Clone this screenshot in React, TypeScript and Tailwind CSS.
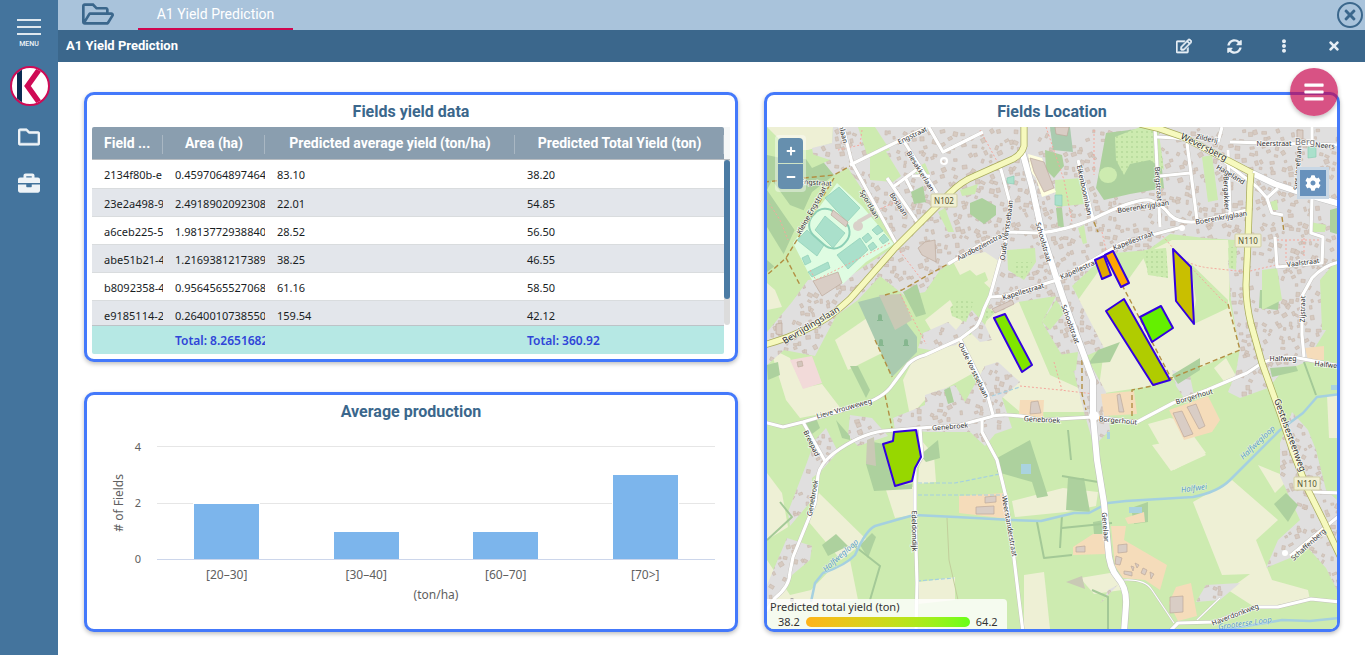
import React from "react";
import {
  FaBars,
  FaBriefcase,
  FaCog,
  FaEllipsisV,
  FaMinus,
  FaPlus,
  FaRegEdit,
  FaRegFolder,
  FaRegFolderOpen,
  FaSyncAlt,
  FaTimes,
} from "react-icons/fa";

const COLUMNS = ["Field ...", "Area (ha)", "Predicted average yield (ton/ha)", "Predicted Total Yield (ton)"];

const ROWS = [
  ["2134f80b-e", "0.4597064897464", "83.10", "38.20"],
  ["23e2a498-9", "2.4918902092308", "22.01", "54.85"],
  ["a6ceb225-5", "1.9813772938840", "28.52", "56.50"],
  ["abe51b21-4", "1.2169381217389", "38.25", "46.55"],
  ["b8092358-4", "0.9564565527068", "61.16", "58.50"],
  ["e9185114-2", "0.2640010738550", "159.54", "42.12"],
];

const BARS = [
  { label: "[20–30]", value: 2 },
  { label: "[30–40]", value: 1 },
  { label: "[60–70]", value: 1 },
  { label: "[70>]", value: 3 },
];

/* ---------- Map data ---------- */

const RESIDENTIAL = [
  "812,148 832,143 833,127 1337,127 1337,258 1322,290 1326,330 1306,362 1282,372 1268,388 1240,398 1228,392 1236,372 1240,348 1236,330 1231,300 1228,262 1236,240 1205,238 1170,234 1148,250 1104,254 1096,264 1072,286 1104,348 1086,356 1106,392 1110,430 1094,446 1084,412 1074,372 1060,352 1042,322 1056,296 1018,302 1000,312 988,308 1000,262 985,252 958,258 940,270 925,292 905,296 880,276 858,300 836,316 815,356 784,350 767,365 767,332 792,302 808,280 850,276 898,244 848,168 828,178 815,165",
  "923,333 948,322 956,330 972,310 985,325 992,340 980,342 968,330 956,345 930,350 918,348",
  "893,418 925,405 925,395 955,385 965,402 985,366 998,362 1020,382 1002,398 1012,428 995,434 985,446 970,432 930,432 895,430",
  "850,415 872,418 888,436 858,446 848,436",
  "806,465 815,440 826,428 838,452 822,470 812,478 812,500 790,526 788,512",
  "767,585 787,538 812,546 810,560 792,575 775,600 767,605",
  "1280,443 1292,412 1308,430 1316,450 1326,490 1337,500 1337,590 1326,568 1308,548 1290,558 1266,568 1278,540 1300,520 1280,476",
  "1196,602 1206,585 1240,583 1220,600",
  "1172,370 1190,376 1194,395 1184,398 1176,386",
  "1108,590 1118,585 1100,603 1104,600",
];

const CREAM = [
  "767,127 833,127 832,143 808,150 790,150 778,138",
  "1078,300 1105,262 1128,280 1148,252 1172,240 1228,240 1230,262 1229,300 1240,350 1172,380 1152,386 1098,394 1104,350 1094,348",
  "903,380 913,360 960,342 985,325 992,305 1018,300 1050,375 1092,394 1090,412 1020,412 1000,395 975,372 925,400 910,416",
  "835,340 867,318 882,353 848,370",
  "770,348 790,358 803,388 822,384 842,410 800,418 786,400",
  "925,320 950,300 975,345 940,345",
  "970,252 990,243 1000,255 992,290 970,270 960,275 950,256",
  "767,473 782,493 788,527 767,540",
  "819,493 867,540 841,560 808,521",
  "886,490 913,487 913,515 895,518",
  "921,440 934,455 936,482 918,484",
  "919,582 955,577 955,600 918,604",
  "1012,501 1063,488 1098,492 1096,506 1066,512 1015,517",
  "1152,445 1178,440 1192,440 1206,455 1171,471",
  "1148,424 1170,418 1182,420 1206,453 1174,470",
  "1193,502 1232,480 1278,520 1256,540 1272,580 1308,590 1310,600 1256,608 1228,590 1250,574 1222,575",
  "1258,465 1290,478 1275,493",
  "1080,578 1116,572 1122,590 1094,594",
  "1024,575 1044,572 1050,629 1024,629",
  "767,560 790,595 811,590 830,570 850,560 858,600 767,610",
  "1214,368 1226,358 1236,376 1226,384",
  "1327,395 1337,395 1337,438 1329,438",
  "767,283 775,290 782,307 767,310",
];

const GRASS = [
  "1190,263 1228,300 1228,308 1192,325 1196,300",
  "870,154 885,150 901,176 893,182 870,180",
  "858,127 875,127 890,150 868,158",
  "912,170 925,163 930,175 920,178",
  "945,208 954,232 948,232 938,212",
  "1055,180 1082,178 1084,204 1056,207",
  "1202,157 1212,155 1218,200 1208,202",
  "1262,270 1277,268 1282,300 1262,310",
  "1084,225 1087,243 1083,244 1078,228",
  "1007,250 1035,248 1036,262 1024,280 1008,270",
  "955,285 985,272 988,280 960,300",
  "1042,322 1056,300 1065,312 1050,330",
  "1058,355 1078,352 1076,370 1062,376",
  "1320,280 1337,260 1337,330 1322,330",
  "1270,202 1277,200 1278,210 1272,210",
  "1142,255 1166,248 1168,275 1148,270",
  "1310,222 1326,225 1325,232 1310,232",
  "960,190 978,184 975,194 962,196",
];

const FOREST = [
  "767,155 790,160 820,158 834,175 812,192 780,262 767,272",
  "970,203 982,198 996,206 996,215 984,224 970,214",
  "911,192 923,186 926,202 914,204",
  "1106,133 1130,130 1152,127 1160,150 1164,188 1130,194 1104,200 1096,188",
  "1045,150 1062,155 1064,166 1054,178 1046,170",
  "1056,208 1062,208 1064,228 1058,226",
  "1260,290 1280,290 1278,310 1259,308",
  "1330,210 1337,208 1337,234 1330,232",
  "903,292 917,284 926,314 916,317",
  "873,442 884,444 895,486 912,484 912,489 874,491 866,464",
  "997,458 1030,440 1048,496 1037,498 1032,482 997,472",
  "1088,364 1098,350 1120,342 1110,362",
  "1172,375 1200,358 1200,370 1178,384",
  "850,366 858,366 870,390 866,398",
  "836,420 850,436 850,440 842,438",
  "944,390 950,387 954,402 948,404",
  "1274,504 1286,493 1298,505 1288,522",
  "860,545 872,533 876,537 868,558",
  "1131,508 1148,502 1148,522 1134,524",
  "1270,368 1296,366 1298,371 1272,377",
  "822,545 836,534 848,546 828,556",
  "1068,478 1084,478 1090,512 1066,510",
  "1093,522 1104,520 1102,534 1094,534",
  "767,365 778,362 780,375 768,380",
  "804,420 816,418 820,428 812,434",
  "920,455 938,440 940,458 926,462",
];

const YARD = [
  "959,496 1004,493 1009,519 959,513",
  "1111,526 1126,526 1124,540 1167,565 1160,590 1145,580 1123,578 1115,566",
  "1176,587 1191,583 1197,616 1178,621 1169,603",
  "1073,547 1093,534 1104,534 1106,554 1073,555",
  "1101,394 1134,391 1137,414 1104,416",
  "1169,410 1208,396 1220,420 1212,432 1184,440",
  "1020,400 1044,400 1043,418 1019,414",
  "1305,348 1324,346 1324,360 1308,360",
  "1125,518 1144,512 1145,522 1128,524",
];

const LARGE_BUILDINGS = [
  "813,281 838,272 842,283 822,296",
  "1030,158 1044,162 1054,188 1044,192 1034,172",
  "1173,413 1182,411 1193,434 1184,437",
  "1187,407 1196,404 1205,426 1199,429",
  "976,507 994,506 994,514 976,514",
  "985,497 996,496 996,502 985,503",
  "1170,597 1183,596 1183,612 1170,613",
  "1118,545 1127,544 1127,552 1118,553",
  "1076,547 1085,546 1085,552 1076,552",
  "1117,395 1120,394 1124,412 1119,412",
  "1031,402 1038,401 1041,413 1030,414",
  "992,309 1012,300 1014,304 995,313",
  "1297,130 1303,130 1303,139 1297,139",
  "833,210 848,222 846,227 831,215",
  "925,242 935,240 936,262 922,255 918,248",
  "1055,127 1069,127 1067,136 1056,134",
  "776,324 782,323 782,335 776,334",
];

const MAIN_YELLOW = [
  "M1024 124V146Q1022 154 1013 159L975 176Q962 181 950 193L895 248L850 299Q828 320 805 330Q786 339 764 345",
  "M1140 124L1157 128L1183 137L1252 173",
  "M1251 173L1250 185L1248 240L1246 285Q1246 304 1251 324L1262 363L1280 413L1293 452L1307 488L1324 522L1340 556",
];

const MAIN_WHITE = [
  "M1022 151L1032 187L1042 233L1057 280L1068 312L1082 350L1093 380V416L1097 460L1104 503L1108 547Q1109 568 1118 578Q1127 588 1126 605L1124 632",
  "M1252 173L1275 184L1302 193L1340 204",
];

const ROADS = [
  "M764 422L783 427L803 422L860 405Q884 398 893 384L908 364Q914 358 925 355L960 339L976 327Q980 322 984 309L990 296L1000 260Q1010 234 1010 203L1000 166",
  "M960 339L987 393L993 415",
  "M803 422L825 461",
  "M764 614L775 598Q790 586 790 572L793 557L815 503L818 475Q820 464 834 453Q860 434 883 431L920 428L960 425L990 417Q1000 413 1027 417L1040 420L1093 417L1137 422L1173 403L1207 390L1247 373L1262 363Q1280 355 1298 358L1340 366",
  "M920 428L922 457L915 468V513L917 583L916 632",
  "M982 420V432L997 460L1006 497L1013 550L1019 600L1023 632",
  "M990 297L1005 296L1057 280L1093 260L1122 243L1182 227",
  "M948 264L980 245L1008 232L1040 233Q1067 230 1093 219Q1135 198 1150 200Q1162 204 1170 215Q1178 223 1195 222L1247 210",
  "M1155 127L1160 227",
  "M1078 160L1093 219",
  "M842 124L852 163L897 245",
  "M850 165L927 127",
  "M903 140L937 193",
  "M927 124L943 152L983 132",
  "M887 178L918 223",
  "M893 187L920 167M905 177L912 191M912 176L930 176",
  "M1157 137Q1195 138 1207 148L1257 187L1267 198Q1270 208 1272 213L1283 215M1267 198L1278 188",
  "M1187 143L1197 220M1228 150L1230 214M1160 176L1190 173",
  "M1230 142L1340 145M1222 127L1218 142M1312 127V145",
  "M1312 197L1311 233L1323 237L1322 263L1277 267L1275 237",
  "M1340 262Q1325 264 1312 278L1302 296V335L1304 357",
  "M1169 632L1178 623L1215 622L1256 607L1278 607L1311 599L1340 602",
  "M1340 515L1290 556M1312 492L1340 493",
];

const LANES = ["M1124 580Q1145 579 1152 590L1174 623", "M1197 620L1220 598"];

const RIVERS = [
  "M811 602L815 583L823 573Q846 565 855 555Q866 530 875 526L889 522L914 515L956 517L1012 520L1041 521L1074 513H1089L1108 503L1126 501L1193 497Q1218 492 1230 480L1252 458L1280 430L1303 413L1317 397L1340 394",
  "M1205 632L1240 627L1271 622L1282 620L1310 621L1340 618",
];

const TRACKS = [
  "M764 182L834 175L850 166M834 178L786 258L767 275M786 258L800 285",
  "M875 340L892 377M885 395L892 428",
  "M885 295L902 290L930 274L948 264",
  "M1094 222L1098 232M1122 285L1130 300L1172 380M1228 304L1240 350L1152 386L1132 390V422M1082 360V394L1086 410",
  "M1282 217L1284 232",
];

const PATHS = [
  "M980 130L998 163M1046 127L1064 180L1072 222M1094 130V175M1102 232L1106 250",
  "M1160 233L1180 256Q1190 266 1210 268L1246 272L1280 264M1180 256L1222 300L1228 304",
  "M900 294L926 344M767 200L780 220L788 240M1020 386L1060 390L1094 394M1054 362L1062 390",
  "M873 212L900 200M895 245L922 280M1277 240H1322M1286 240V262M1304 238V258",
  "M810 270L816 280L890 243M862 130L860 145L838 150",
];

const STREET_LABELS: [number, number, number, string, number?][] = [
  [912, 135, -26, "Engstraat"],
  [816, 182, 3, "Engstraat"],
  [811, 210, -61, "Kleine Engstraat"],
  [870, 204, 60, "Sportlaan"],
  [899, 204, 56, "Boslaan"],
  [921, 171, 58, "Biesakkerlaan"],
  [844, 134, 76, "nlaan"],
  [811, 325, -31, "Bevrijdingslaan", 9],
  [982, 245, -28, "Aardbezienstraat"],
  [1006, 230, -82, "Oude Vorstsebaan"],
  [1044, 242, 74, "Schoolstraat"],
  [1071, 324, 70, "Schoolstraat"],
  [1023, 291, -17, "Kapellestraat"],
  [1080, 268, -24, "Kapellestraat"],
  [1133, 240, -21, "Kapellestraat"],
  [1085, 190, 78, "Eikenboomlaan"],
  [1143, 206, -9, "Boerenkrijglaan"],
  [1221, 217, -10, "Boerenkrijglaan"],
  [1204, 147, 27, "Weversberg", 9],
  [1207, 138, 13, "Zilderij"],
  [1231, 174, 31, "Hageland"],
  [1159, 184, 86, "Bergstraat"],
  [1227, 193, 88, "Bergakker"],
  [1274, 143, 0, "Neerstraat"],
  [1325, 145, 4, "Neers"],
  [1297, 168, -86, "Sint Jozeflaan"],
  [1303, 262, -7, "Vaalstraat"],
  [1302, 309, -89, "Zijstraat"],
  [1283, 358, 0, "Halfweg"],
  [1326, 364, 6, "Halfwe"],
  [844, 408, -16, "Lieve Vrouweweg"],
  [974, 370, 64, "Oude Vorstsebaan"],
  [812, 443, 64, "Breepad"],
  [950, 426, -5, "Genebroek"],
  [1042, 419, 3, "Genebroek"],
  [1118, 420, 5, "Borgerhout"],
  [1194, 396, -17, "Borgerhout"],
  [812, 498, -80, "Genebroek"],
  [915, 531, 89, "Edeldomdijk"],
  [1010, 526, 80, "Weerstanderstraat"],
  [1106, 527, 85, "Genelaar"],
  [1290, 435, 70, "Gestelsesteenweg", 9],
  [1308, 544, -42, "Schaffenberg"],
  [1235, 614, -21, "Haverdonkweg"],
];

const WATER_LABELS: [number, number, number, string][] = [
  [841, 556, -42, "Halfwegloop"],
  [1258, 443, -44, "Halfwegloop"],
  [1194, 489, -8, "Halfwei"],
  [1245, 624, -8, "Grooterse Loop"],
];

const FIELDS = [
  { points: "1095,260 1104,256 1111,275 1102,279", fill: "#e2a800" },
  { points: "1105,255 1113,251 1129,283 1121,287", fill: "#ffa500" },
  { points: "1173,249 1191,267 1194,324 1176,301", fill: "#c9bf00" },
  { points: "1106,311 1124,299 1170,380 1153,385", fill: "#b0cc00" },
  { points: "1140,317 1161,306 1173,328 1152,342", fill: "#64f000" },
  { points: "994,318 1005,314 1032,365 1022,372", fill: "#80e600" },
  { points: "883,444 893,441 894,432 916,430 921,457 915,468 912,481 895,486", fill: "#97d700" },
];

/* Small deterministic noise source for the scatter of houses. */
const noise = (n: number) => {
  const v = Math.sin(n * 127.1 + 11.7) * 43758.5453;
  return v - Math.floor(v);
};

const HOUSES = (() => {
  const list: { x: number; y: number; w: number; h: number; a: number }[] = [];
  let seed = 1;
  for (let y = 129; y < 629; y += 7) {
    for (let x = 769; x < 1337; x += 7) {
      seed += 1;
      if (noise(seed) < 0.42) continue;
      list.push({
        x: x + noise(seed + 0.31) * 5,
        y: y + noise(seed + 0.57) * 5,
        w: 2 + noise(seed + 0.73) * 3,
        h: 2 + noise(seed + 0.91) * 2.5,
        a: noise(seed + 0.13) * 60 - 30,
      });
    }
  }
  return list;
})();

function Polygons({ items, fill }: { items: string[]; fill: string }) {
  return (
    <g fill={fill}>
      {items.map((p) => (
        <polygon key={p} points={p} />
      ))}
    </g>
  );
}

function Strokes({ items, color, width, dash }: { items: string[]; color: string; width: number; dash?: string }) {
  return (
    <g fill="none" stroke={color} strokeWidth={width} strokeDasharray={dash} strokeLinejoin="round">
      {items.map((d) => (
        <path key={d} d={d} />
      ))}
    </g>
  );
}

function RoadShield({ x, y, text }: { x: number; y: number; text: string }) {
  return (
    <g>
      <rect x={x - 13} y={y - 6} width="26" height="13" rx="1" fill="#f0efd2" stroke="#d2d0a4" />
      <text x={x} y={y + 4} textAnchor="middle" fontSize="8" fill="#55552e">
        {text}
      </text>
    </g>
  );
}

function FieldMap() {
  return (
    <svg
      viewBox="767 127 570 502"
      preserveAspectRatio="xMidYMid slice"
      className="absolute inset-0 h-full w-full font-['Noto_Sans','Open_Sans',sans-serif]"
      role="img"
      aria-label="Fields Location"
    >
      <defs>
        <clipPath id="residential">
          {RESIDENTIAL.map((p) => (
            <polygon key={p} points={p} />
          ))}
        </clipPath>
        <pattern id="scrub" width="5" height="5" patternUnits="userSpaceOnUse">
          <rect width="5" height="5" fill="#cdebb0" />
          <circle cx="2" cy="2" r="0.7" fill="#9cc983" />
        </pattern>
      </defs>
      <rect x="767" y="127" width="570" height="502" fill="#cdebb0" />
      <Polygons items={CREAM} fill="#eef0d5" />
      <Polygons items={RESIDENTIAL} fill="#e0dfdf" />
      <g clipPath="url(#residential)" fill="#d6cac1" stroke="#c6b5a9" strokeWidth="0.5">
        {HOUSES.map((h, i) => (
          <rect key={i} x={h.x} y={h.y} width={h.w} height={h.h} transform={`rotate(${h.a} ${h.x} ${h.y})`} />
        ))}
      </g>
      <Polygons items={FOREST} fill="#add19e" />
      <Polygons items={GRASS} fill="#cdebb0" />
      <Polygons
        items={["772,180 790,205 808,212 796,232 782,212 767,190", "767,227 786,258 776,268 767,260", "800,150 830,160 812,168"]}
        fill="#cdebb0"
      />
      <g fill="url(#scrub)">
        <polygon points="1115,137 1140,127 1158,127 1164,170 1150,160 1130,164 1124,175 1116,160" />
        <polygon points="950,308 958,300 974,302 966,322 952,316" />
        <polygon points="1144,250 1166,248 1168,278 1148,275" />
        <polygon points="1228,248 1237,246 1236,270 1229,268" />
        <polygon points="985,308 996,312 985,322" />
        <polygon points="1016,262 1032,262 1024,278 1016,276" />
      </g>
      <ellipse cx="1108" cy="175" rx="9" ry="8" fill="#cdebb0" />
      <polygon points="858,302 885,295 917,337 917,352 892,377" fill="#aacbaf" />
      <polygon points="879,295 901,294 912,320 895,330" fill="#c9c9b5" />
      <polygon points="867,440 874,437 876,466 866,464" fill="#c9c9b5" />
      <polygon points="1066,582 1082,576 1085,589" fill="#c9c9b5" />
      <polygon points="1050,127 1070,127 1073,152 1053,150" fill="#aacbaf" />
      <polygon points="790,360 812,356 822,383 803,389" fill="#f2dad9" />
      <polygon points="797,362 802,361 803,366 798,367" fill="#d3c5bb" stroke="#bda99b" strokeWidth="0.6" />
      <g fill="#86b78f">
        <path d="M878 320v-4a2 2 0 0 1 4 0v4h1v1h-6v-1zM879 345v-4a2 2 0 0 1 4 0v4h1v1h-6v-1zM904 345v-4a2 2 0 0 1 4 0v4h1v1h-6v-1z" />
      </g>
      <path d="M1028 154L1042 158L1048 176L1056 192L1042 197L1036 178L1031 172Z" fill="#ffffe0" />
      <Polygons items={YARD} fill="#f5dcba" />
      {/* Sports centre */}
      <polygon points="837,183 862,206 894,244 866,262 843,284 812,280 793,243" fill="#dffce2" />
      <g fill="#aae0cb" stroke="#8ccfb6" strokeWidth="0.7">
        <polygon points="839,187 860,208 847,222 825,198" />
        <polygon points="825,216 845,233 833,248 815,230" />
        <polygon points="807,230 824,245 817,256 797,240" />
        <polygon points="860,238 868,250 848,269 837,255" />
        <polygon points="862,238 868,233 872,238 866,243" />
        <polygon points="872,230 878,225 883,231 877,235" />
        <polygon points="868,246 873,242 877,247 871,251" />
        <polygon points="879,239 884,234 889,240 883,244" />
        <polygon points="802,258 808,255 811,262 805,265" />
        <polygon points="808,272 828,262 830,268 812,277" />
        <polygon points="1055,195 1062,195 1062,206 1055,205" />
        <polygon points="1308,147 1316,147 1316,157 1308,158" />
        <polygon points="1007,178 1014,176 1014,184 1007,183" />
      </g>
      <rect x="808" y="213" width="42" height="31" rx="14" fill="none" stroke="#8ccfb6" strokeWidth="2" transform="rotate(42 829 229)" />
      <circle cx="858" cy="226" r="5" fill="#d9d0c9" />
      <path d="M858 222L872 214" stroke="#d9d0c9" strokeWidth="4" />
      <g fill="#d9cdc5" stroke="#bda99b" strokeWidth="0.7">
        {LARGE_BUILDINGS.map((p) => (
          <polygon key={p} points={p} />
        ))}
        <path d="M1116 556l6 2-2 7-5-1zM1124 571l8 1v4l-8-2zM1135 563l4 2-2 3zM1143 568l4 2-2 5-4-2zM1150 572l4 2-3 5zM1131 566l3 1-1 4z" />
      </g>
      <g fill="#aad3df">
        <rect x="1021" y="464" width="10" height="10" />
        <rect x="1129" y="507" width="13" height="6" />
        <rect x="1107" y="432" width="3" height="7" />
        <rect x="1331" y="385" width="6" height="5" />
      </g>
      <Strokes items={["M767 540L792 517L780 502M1037 522L1044 558L1072 555M1062 515L1060 548M1062 528L1112 523M1068 430L1071 460M1062 476L1098 482M1304 362L1316 395M1092 590L1108 597V629M852 544L880 566L870 600"]} color="#a4c997" width={2} />
      <Strokes items={["M947 518L949 560L958 600"]} color="#c2cf9c" width={1} />
      <Strokes items={RIVERS} color="#a5d0e0" width={2.5} />
      <Strokes items={["M918 483H955L1000 474M918 495H1004M917 581L954 578M992 396L1020 387"]} color="#a5d0e0" width={1.2} dash="4 2" />
      <Strokes items={PATHS} color="#f5a79c" width={1} dash="2 2" />
      <Strokes items={TRACKS} color="#b28f43" width={1.4} dash="5 3" />
      <Strokes items={LANES} color="#c4c2bd" width={2} />
      <Strokes items={LANES} color="#ffffff" width={1.2} />
      <Strokes items={ROADS} color="#c4c2bd" width={4} />
      <Strokes items={MAIN_WHITE} color="#bdbdbd" width={7} />
      <Strokes items={ROADS} color="#ffffff" width={3.2} />
      <Strokes items={MAIN_WHITE} color="#ffffff" width={6} />
      <Strokes items={MAIN_YELLOW} color="#a9ab5c" width={7} />
      <Strokes items={MAIN_YELLOW} color="#f6f9be" width={5.5} />
      <circle cx="1094" cy="416" r="5" fill="#ffffff" />
      <circle cx="1182" cy="228" r="3" fill="#ffffff" />
      <circle cx="944" cy="161" r="3" fill="none" stroke="#ffffff" strokeWidth="2" />
      <circle cx="1285" cy="553" r="3" fill="#ffffff" />
      <g fill="#2f2f2f" stroke="#ffffff" strokeOpacity="0.7" strokeWidth="1.6" paintOrder="stroke" textAnchor="middle">
        {STREET_LABELS.map(([x, y, angle, text, size], i) => (
          <text key={i} x={x} y={y + 3} fontSize={size ?? 7} transform={`rotate(${angle} ${x} ${y})`}>
            {text}
          </text>
        ))}
        <text x="1305" y="145" fontSize="9" fill="#777777">
          Berg
        </text>
      </g>
      <g fill="#5a9cc4" fontStyle="italic" textAnchor="middle" stroke="#ffffff" strokeOpacity="0.5" strokeWidth="1" paintOrder="stroke">
        {WATER_LABELS.map(([x, y, angle, text], i) => (
          <text key={i} x={x} y={y + 2} fontSize="8" transform={`rotate(${angle} ${x} ${y})`}>
            {text}
          </text>
        ))}
      </g>
      <RoadShield x={944} y={200} text="N102" />
      <RoadShield x={1248} y={240} text="N110" />
      <RoadShield x={1307} y={483} text="N110" />
      <g stroke="#3300e0" strokeWidth="2" strokeLinejoin="round">
        {FIELDS.map((f) => (
          <polygon key={f.points} points={f.points} fill={f.fill} />
        ))}
      </g>
      <circle cx="792" cy="600" r="2" fill="#999999" />
      <circle cx="792" cy="606" r="2" fill="#999999" />
    </svg>
  );
}

/* ---------- Layout ---------- */

function Panel({ title, children }: { title: string; children: React.ReactNode }) {
  return (
    <section className="flex flex-col rounded-[10px] border-3 border-[#4479fb] bg-white shadow-[0_2px_4px_rgba(0,0,0,0.25)]">
      <h2 className="h-8 shrink-0 text-center text-base leading-[34px] font-bold text-[#3b678c]">{title}</h2>
      {children}
    </section>
  );
}

const ROW_GRID = "grid grid-cols-[71fr_102fr_250fr_209fr]";

function YieldTable() {
  return (
    <div className="flex px-[5px] pb-[5px]">
      <table className="block min-w-0 flex-1 overflow-hidden rounded-[2px] text-[11px]">
        <thead className="block border-b border-[#b9bdc1] bg-[#8a9eaf] text-sm text-white">
          <tr className={ROW_GRID}>
            {COLUMNS.map((c, i) => (
              <th
                key={c}
                scope="col"
                className={`relative flex h-8 items-center overflow-hidden font-bold whitespace-nowrap ${i === 0 ? "pl-3" : "justify-center"}`}
              >
                {c}
                <span className="absolute top-2 right-0 h-[19px] w-px bg-[#a9b7c3]" />
              </th>
            ))}
          </tr>
        </thead>
        <tbody className="block h-[165px] overflow-hidden font-['Noto_Sans','Open_Sans',sans-serif] text-[#181d1f]">
          {ROWS.map((row) => (
            <tr key={row[0]} className={`${ROW_GRID} h-7 border-b border-[#d9dcde] odd:bg-white even:bg-[#e3e6eb] first:h-[29px]`}>
              {row.map((cell, i) => (
                <td key={i} className="overflow-hidden pl-3 leading-[29px] whitespace-nowrap">
                  {cell}
                </td>
              ))}
            </tr>
          ))}
        </tbody>
        <tfoot className="block border-t border-[#bdc3c7] bg-[#b6e8e4] font-['Noto_Sans','Open_Sans',sans-serif] text-xs font-semibold text-[#2f45d8]">
          <tr className={`${ROW_GRID} h-7`}>
            {["", "Total: 8.2651682", "", "Total: 360.92"].map((cell, i) => (
              <td key={i} className="overflow-hidden pl-3 leading-[29px] whitespace-nowrap">
                {cell}
              </td>
            ))}
          </tr>
        </tfoot>
      </table>
      <div className="flex w-1.5 flex-col">
        <div className="h-[33px] border-b border-[#b9bdc1] bg-[#f5f7f7]" />
        <div className="h-[165px] rounded-b bg-[#dcdcdc]">
          <div className="h-[139px] rounded bg-[#4b7ba4]" />
        </div>
      </div>
    </div>
  );
}

function ProductionChart() {
  return (
    <div className="flex flex-1 flex-col pt-3 pr-5 pb-4 pl-6 font-['Noto_Sans','Open_Sans',sans-serif] text-xs text-[#606060]">
      <div className="flex">
        <div className="flex w-4 items-center justify-center">
          <span className="rotate-180 whitespace-nowrap [writing-mode:vertical-rl]">{"# of Fields"}</span>
        </div>
        <div className="flex h-[128px] w-[14px] flex-col justify-between text-right text-[11px] leading-4">
          <span>4</span>
          <span>2</span>
          <span>0</span>
        </div>
        <div className="relative mt-[7px] ml-4 flex h-[114px] flex-1 flex-col justify-between">
          <div className="h-px bg-[#e6e6e6]" />
          <div className="h-px bg-[#e6e6e6]" />
          <div className="h-px bg-[#ccd6eb]" />
          <div className="absolute inset-x-0 top-0 bottom-px grid grid-cols-4 items-end justify-items-center">
            {BARS.map((b) => (
              <div
                key={b.label}
                className="w-[48%] border-x border-t border-white bg-[#7cb5ec]"
                style={{ height: `${b.value * 25}%` }}
              />
            ))}
          </div>
        </div>
      </div>
      <div className="ml-[46px] grid grid-cols-4 text-center leading-4">
        {BARS.map((b) => (
          <span key={b.label}>{b.label}</span>
        ))}
      </div>
      <div className="mt-1 ml-[46px] text-center leading-4">(ton/ha)</div>
    </div>
  );
}

function MapView() {
  return (
    <div className="relative flex flex-1 flex-col overflow-hidden rounded-b-[7px]">
      <FieldMap />
      <div className="absolute top-2 left-2 flex flex-col gap-px rounded bg-white/40 p-[3px]">
        <button type="button" aria-label="Zoom in" className="flex size-[25px] items-center justify-center rounded-t-sm bg-[#668fae] text-white">
          <FaPlus size={10} />
        </button>
        <button type="button" aria-label="Zoom out" className="flex size-[25px] items-center justify-center rounded-b-sm bg-[#668fae] text-white">
          <FaMinus size={10} />
        </button>
      </div>
      <button
        type="button"
        aria-label="Map settings"
        className="absolute top-10 right-2 flex size-8 items-center justify-center border-3 border-[#d3dfe9]/90 bg-[#6791bc] text-white"
      >
        <FaCog size={16} />
      </button>
      <div className="absolute bottom-0 left-0 w-60 rounded-tr bg-white/80 pl-[3px] font-['Noto_Sans','Open_Sans',sans-serif] text-[11px] leading-[15px] text-[#333]">
        <div>Predicted total yield (ton)</div>
        <div className="flex items-center gap-1.5 pl-2">
          <span>38.2</span>
          <span className="h-2.5 w-[164px] rounded-full bg-linear-to-r from-[#ffb31a] to-[#66ff1a]" />
          <span>64.2</span>
        </div>
      </div>
    </div>
  );
}

function Logo() {
  return (
    <svg viewBox="0 0 40 40" className="size-10" role="img" aria-label="Logo">
      <defs>
        <clipPath id="logo-disc">
          <circle cx="20" cy="20" r="18" />
        </clipPath>
      </defs>
      <circle cx="20" cy="20" r="19" fill="#ffffff" stroke="#cf0a55" strokeWidth="2" />
      <g clipPath="url(#logo-disc)">
        <rect x="7" y="2" width="5" height="36" fill="#0b2c52" />
        <path d="M31 1L17.5 20L31 39" fill="none" stroke="#cf0a55" strokeWidth="5.5" />
      </g>
    </svg>
  );
}

function IconButton({ label, children }: { label: string; children: React.ReactNode }) {
  return (
    <button type="button" aria-label={label} className="flex size-5 items-center justify-center text-[#e6eef5]">
      {children}
    </button>
  );
}

export default function App() {
  return (
    <div className="flex min-h-screen bg-white font-[Roboto,sans-serif]">
      <aside className="flex w-[58px] shrink-0 flex-col items-center bg-[#44749d] text-[#eef3f7]">
        <button type="button" className="mt-[19px] flex flex-col items-center gap-1">
          <span className="flex h-4 w-6 flex-col justify-between">
            <span className="h-0.5 bg-[#dfe8ef]" />
            <span className="h-0.5 bg-[#dfe8ef]" />
            <span className="h-0.5 bg-[#dfe8ef]" />
          </span>
          <span className="text-[7px] leading-2.5 font-medium">MENU</span>
        </button>
        <a href="#home" className="mt-[17px] ml-0.5">
          <Logo />
        </a>
        <button type="button" aria-label="Projects" className="mt-5">
          <FaRegFolder size={22} stroke="currentColor" strokeWidth={14} />
        </button>
        <button type="button" aria-label="Toolbox" className="mt-6">
          <FaBriefcase size={22} />
        </button>
      </aside>

      <div className="relative flex min-w-0 flex-1 flex-col">
        <nav className="flex h-[30px] items-center bg-[#a9c3db]">
          <button type="button" aria-label="Open" className="ml-6 text-[#3b678c]">
            <FaRegFolderOpen size={32} className="-mt-0.5" />
          </button>
          <a
            href="#yield"
            className="ml-6 flex h-full w-[155px] items-center justify-center border-b-2 border-[#d0064f] text-sm text-white"
          >
            A1 Yield Prediction
          </a>
          <button
            type="button"
            aria-label="Close all"
            className="mr-0.5 ml-auto flex size-[26px] items-center justify-center rounded-full border-2 border-[#3b678c] text-[#3b678c]"
          >
            <FaTimes size={16} />
          </button>
        </nav>
        <header className="flex h-8 items-center bg-[#3b678c] pr-[21px] pl-2 text-white">
          <h1 className="flex-1 text-[13px] font-bold">A1 Yield Prediction</h1>
          <div className="flex gap-[30px]">
            <IconButton label="Edit">
              <FaRegEdit size={16} stroke="currentColor" strokeWidth={22} />
            </IconButton>
            <IconButton label="Refresh">
              <FaSyncAlt size={15} />
            </IconButton>
            <IconButton label="More">
              <FaEllipsisV size={14} />
            </IconButton>
            <IconButton label="Close">
              <FaTimes size={14} />
            </IconButton>
          </div>
        </header>
        <main className="grid flex-1 grid-cols-[654fr_576fr] gap-x-[26px] pt-[30px] pr-[25px] pb-[23px] pl-[26px]">
          <div className="grid grid-rows-[270px_minmax(240px,1fr)] gap-[30px]">
            <Panel title="Fields yield data">
              <YieldTable />
            </Panel>
            <Panel title="Average production">
              <ProductionChart />
            </Panel>
          </div>
          <Panel title="Fields Location">
            <MapView />
          </Panel>
        </main>
        <button
          type="button"
          aria-label="Dashboard menu"
          className="absolute top-[68px] right-[27px] flex size-12 items-center justify-center rounded-full bg-[#c80850]/70 text-white shadow-[0_2px_4px_rgba(0,0,0,0.25)]"
        >
          <FaBars size={22} />
        </button>
      </div>
    </div>
  );
}
